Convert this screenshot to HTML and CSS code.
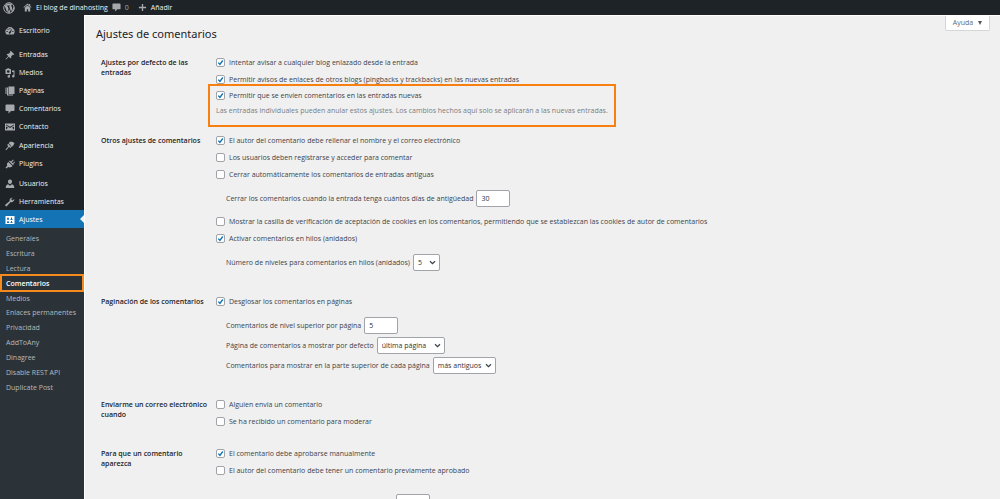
FILE: index.html
```html
<!DOCTYPE html>
<html lang="es">
<head>
<meta charset="utf-8">
<title>Ajustes de comentarios</title>
<link rel="stylesheet" href="styles.css">
</head>
<body>
<header class="bar">
  <a class="bar-logo" href="#" aria-label="WordPress"><svg viewBox="0 0 20 20"><circle cx="10" cy="10" r="8.8" fill="none" stroke="currentColor" stroke-width="1.6"/><path d="M2.9 6.8 7 17.4l2.2-6.3L7.6 6.9 6.3 6.6V6h5.4v.6l-1.4.3 3.3 9.8 1.3-4.5c.5-1.800.2-2.900-.4-3.900-1.300-2-.6-3.500.9-3.700A8 8 0 0 0 3.500 5.800z" fill="currentColor"/><path d="m10.200 11.500-2.300 6.200a8 8 0 0 0 4.500 0zM17.200 6.600c.2 1.700-.3 3-.9 4.600l-2.200 5.900a8 8 0 0 0 3.100-10.500z" fill="currentColor"/></svg></a>
  <a class="bar-item bar-site" href="#"><svg viewBox="0 0 20 20"><path d="M10 1 1 9.500l1.200 1.300L10 3.800l7.800 7L19 9.500l-3-2.900V2h-2.500v2.300zM4 10.800V19h4.500v-5h3v5H16v-8.200l-6-5.300z" fill="currentColor"/></svg>El blog de dinahosting</a>
  <a class="bar-item bar-comments" href="#"><svg viewBox="0 0 20 20"><path d="M3 1h14a2 2 0 0 1 2 2v9a2 2 0 0 1-2 2h-5l-5 5v-5H3a2 2 0 0 1-2-2V3a2 2 0 0 1 2-2z" fill="currentColor"/></svg>0</a>
  <a class="bar-item" href="#"><svg viewBox="0 0 20 20"><path d="M8.500 2h3v6.500H18v3h-6.500V18h-3v-6.500H2v-3h6.500z" fill="currentColor"/></svg>Añadir</a>
</header>
<div class="layout">
  <nav class="side" aria-label="Menú principal">
    <a class="item" href="#"><svg viewBox="0 0 20 20"><path fill-rule="evenodd" d="M3 17a9 9 0 1 1 14 0zM9 4v2.500h2V4zM4.500 6.500l1.700 1.700 1.300-1.300-1.700-1.700zM3 10v2h2.500v-2zm11.500 0v2H17v-2zM14.500 5 9 11.500a2 2 0 1 0 2.500 1.700z" fill="currentColor"/></svg>Escritorio</a>
    <a class="item gap-lg" href="#"><svg viewBox="0 0 20 20"><path d="m11.500 1.500 7 7-1.500 1.400-1.300-.4-3.200 3.200c.4 1.800 0 3.300-1.200 4.300l-3.600-3.600L2 19l-1-1 5.600-5.700L3 8.700c1-1.200 2.600-1.600 4.300-1.200l3.200-3.200-.4-1.300z" fill="currentColor"/></svg>Entradas</a>
    <a class="item" href="#"><svg viewBox="0 0 20 20"><path fill-rule="evenodd" d="M2 2h2l1-1.500h3L9 2h2a1 1 0 0 1 1 1v8a1 1 0 0 1-1 1H2a1 1 0 0 1-1-1V3a1 1 0 0 1 1-1zm4.500 2.300a2.700 2.700 0 1 0 0 5.400 2.700 2.700 0 0 0 0-5.400zM14 5h5v11.500a2.500 2.500 0 1 1-2-2.400V8h-3zM10 13.500V17a2.500 2.500 0 1 1-2-2.500v-1z" fill="currentColor"/></svg>Medios</a>
    <a class="item" href="#"><svg viewBox="0 0 20 20"><path d="M7 1h12v15H7zM4 3h2v14h10v2H4zM1 3h2v13H1z" fill="currentColor"/></svg>Páginas</a>
    <a class="item" href="#"><svg viewBox="0 0 20 20"><path d="M3 1h14a2 2 0 0 1 2 2v9a2 2 0 0 1-2 2h-5l-5 5v-5H3a2 2 0 0 1-2-2V3a2 2 0 0 1 2-2z" fill="currentColor"/></svg>Comentarios</a>
    <a class="item" href="#"><svg viewBox="0 0 20 20"><path fill-rule="evenodd" d="M0 3h20v14H0zm2 2v1.500l8 5.500 8-5.500V5l-8 4.500zm0 4v6l4-3.500zm16 0-4 2.500 4 3.500z" fill="currentColor"/></svg>Contacto</a>
    <a class="item gap-sm" href="#"><svg viewBox="0 0 20 20"><path d="M9 2c4-1 7 .5 10 2-1 3-2.500 6-6 8l-3-5-2-2zM6.500 5l6 7.500-1.500 1.500-3-2-5.500 6.500L1 17l5.500-6L4.500 8z" fill="currentColor"/></svg>Apariencia</a>
    <a class="item" href="#"><svg viewBox="0 0 20 20"><path d="m12 5 4-4 1.500 1.500-4 4 2 2L19 5l1 1.500-3.500 3.500 1 1-1.500 1.500L8 4.500 9.500 3zM7 6l8 8c-2.500 3-6 3.500-8.500 2L3 19l-2-2 3.500-3.500C3 11 4 8 7 6z" fill="currentColor"/></svg>Plugins</a>
    <a class="item gap-md" href="#"><svg viewBox="0 0 20 20"><path d="M10 1a4 4 0 0 1 4 4.500C14 8 12.500 10 10 10S6 8 6 5.500A4 4 0 0 1 10 1zM6 10.500l4 3 4-3c3 1 4.500 3 4.500 7.500h-17c0-4.500 1.500-6.500 4.500-7.500z" fill="currentColor"/></svg>Usuarios</a>
    <a class="item" href="#"><svg viewBox="0 0 20 20"><path d="M16.500 8.800a5 5 0 0 1-5.200 1.200L4 18a2 2 0 0 1-3-2.800l8.500-7A5 5 0 0 1 15 1.500l-2.700 3.200 2.500 2.500L18.500 4a5 5 0 0 1-2 4.800z" fill="currentColor"/></svg>Herramientas</a>
    <a class="item current" href="#"><svg viewBox="0 0 20 20"><path fill-rule="evenodd" d="M1 2h18v16H1zm4 3v1.500H4V9h1v1h2V9h1V6.500H7V5zm7 0v3h-1v2h4V8h-1V5zM5 12v1.500H4V16h4v-2.500H7V12zm7 0v2h-1v2h4v-2h-1v-2z" fill="currentColor"/></svg>Ajustes</a>
    <div class="sub">
      <div class="sub-list">
        <a href="#">Generales</a>
        <a href="#">Escritura</a>
        <a href="#">Lectura</a>
        <a class="active" href="#">Comentarios</a>
        <a href="#">Medios</a>
        <a href="#">Enlaces permanentes</a>
        <a href="#">Privacidad</a>
        <a href="#">AddToAny</a>
        <a href="#">Dinagree</a>
        <a href="#">Disable REST API</a>
        <a href="#">Duplicate Post</a>
      </div>
    </div>
  </nav>
  <main class="main">
    <div class="head">
      <h1>Ajustes de comentarios</h1>
      <button class="help" type="button">Ayuda <span class="caret"></span></button>
    </div>
    <form>
      <section class="group">
        <h2>Ajustes por defecto de las entradas</h2>
        <div class="fields">
          <label class="check"><input type="checkbox" checked>Intentar avisar a cualquier blog enlazado desde la entrada</label>
          <label class="check"><input type="checkbox" checked>Permitir avisos de enlaces de otros blogs (pingbacks y trackbacks) en las nuevas entradas</label>
          <div class="marked">
            <label class="check"><input type="checkbox" checked>Permitir que se envíen comentarios en las entradas nuevas</label>
            <p class="hint">Las entradas individuales pueden anular estos ajustes. Los cambios hechos aquí solo se aplicarán a las nuevas entradas.</p>
          </div>
        </div>
      </section>
      <section class="group">
        <h2>Otros ajustes de comentarios</h2>
        <div class="fields">
          <label class="check"><input type="checkbox" checked>El autor del comentario debe rellenar el nombre y el correo electrónico</label>
          <label class="check"><input type="checkbox">Los usuarios deben registrarse y acceder para comentar</label>
          <label class="check"><input type="checkbox">Cerrar automáticamente los comentarios de entradas antiguas</label>
          <div class="nested">
            <label class="line">Cerrar los comentarios cuando la entrada tenga cuántos días de antigüedad <input class="num" type="text" value="30"></label>
          </div>
          <label class="check"><input type="checkbox">Mostrar la casilla de verificación de aceptación de cookies en los comentarios, permitiendo que se establezcan las cookies de autor de comentarios</label>
          <label class="check"><input type="checkbox" checked>Activar comentarios en hilos (anidados)</label>
          <div class="nested">
            <label class="line">Número de niveles para comentarios en hilos (anidados) <select class="sel-xs"><option>5</option></select></label>
          </div>
        </div>
      </section>
      <section class="group">
        <h2>Paginación de los comentarios</h2>
        <div class="fields">
          <label class="check"><input type="checkbox" checked>Desglosar los comentarios en páginas</label>
          <div class="nested">
            <label class="line">Comentarios de nivel superior por página <input class="num" type="text" value="5"></label>
            <label class="line">Página de comentarios a mostrar por defecto <select class="sel-lg"><option>última página</option></select></label>
            <label class="line">Comentarios para mostrar en la parte superior de cada página <select class="sel-md"><option>más antiguos</option></select></label>
          </div>
        </div>
      </section>
      <section class="group">
        <h2>Enviarme un correo electrónico cuando</h2>
        <div class="fields">
          <label class="check"><input type="checkbox">Alguien envía un comentario</label>
          <label class="check"><input type="checkbox">Se ha recibido un comentario para moderar</label>
        </div>
      </section>
      <section class="group">
        <h2>Para que un comentario aparezca</h2>
        <div class="fields">
          <label class="check"><input type="checkbox" checked>El comentario debe aprobarse manualmente</label>
          <label class="check"><input type="checkbox">El autor del comentario debe tener un comentario previamente aprobado</label>
        </div>
      </section>
      <section class="group">
        <div class="fields moderation">
          <input class="num" type="text" aria-label="Enlaces">
        </div>
      </section>
    </form>
  </main>
</div>
</body>
</html>
```
FILE: styles.css
```css
* { box-sizing: border-box; }
html, body { height: 100%; }
body {
  margin: 0;
  display: flex;
  flex-direction: column;
  overflow: hidden;
  background: #f0f0f0;
  color: #3c434a;
  font: 7px/10px "Open Sans", "Noto Sans", sans-serif;
}
a { color: inherit; text-decoration: none; }
svg { display: block; flex: none; }

.bar {
  flex: none;
  display: flex;
  align-items: center;
  height: 15px;
  padding-left: 3px;
  background: #1d2327;
  color: #f0f0f1;
}
.bar svg { width: 9px; height: 9px; color: #a7aaad; }
.bar .bar-logo { margin-right: 8px; }
.bar .bar-logo svg { width: 12px; height: 12px; }
.bar-item { display: flex; align-items: center; gap: 4px; margin-right: 9px; }
.bar-site { margin-right: 4px; }
.bar-comments { color: #a7aaad; }

.layout { flex: 1; min-height: 0; display: flex; }
.side {
  flex: none;
  display: flex;
  flex-direction: column;
  width: 84px;
  padding-top: 6px;
  background: #1d2327;
  color: #f0f0f1;
}
.item {
  flex: none;
  display: flex;
  align-items: center;
  gap: 4px;
  height: 18px;
  padding: 1px 0 0 5px;
}
.item svg { width: 10px; height: 10px; color: #a7aaad; }
.gap-lg { margin-top: 6px; }
.gap-md { margin-top: 2px; }
.gap-sm { margin-top: 1px; }
.current { position: relative; background: #1373b5; color: #fff; }
.item.current svg { color: #fff; }
.current::after {
  content: "";
  position: absolute;
  right: 0;
  top: 5px;
  border: 4px solid transparent;
  border-left: 0;
  border-right-color: #f0f0f0;
}
.sub {
  flex: 1;
  padding-top: 4px;
  background: #2c3338;
  color: #b4b9be;
}
.sub-list { display: grid; grid-auto-rows: 1fr; height: 163px; }
.sub-list a { display: flex; align-items: center; padding-left: 6px; }
.sub-list .active { position: relative; color: #fff; font-weight: 600; }
.sub-list .active::after {
  content: "";
  position: absolute;
  inset: -2px 0 -1px;
  border: 2px solid #f78a1d;
}

.main {
  flex: 1;
  min-width: 0;
  padding: 0 10px 0 11px;
  border: solid #fff;
  border-width: 1px 0 0 1px;
}
.head { display: flex; justify-content: space-between; align-items: flex-start; height: 38px; }
h1 { margin: 9px 0 0; font: 400 11px/18px "Noto Sans", sans-serif; color: #1d2327; }
.help {
  display: flex;
  align-items: center;
  justify-content: center;
  gap: 5px;
  width: 45px;
  height: 15px;
  padding: 0;
  border: 1px solid #d5d6d8;
  border-top: 0;
  border-radius: 0 0 2px 2px;
  background: #fff;
  color: #646970;
  font: inherit;
}
.caret { border: 2px solid transparent; border-top: 4px solid #50575e; border-bottom: 0; }

.group {
  display: grid;
  grid-template-columns: 107px 1fr;
  gap: 8px;
  padding: 0 0 15px 5px;
}
h2 { margin: 4px 0 0; font-size: 7px; line-height: 10px; font-weight: 600; color: #1d2327; }
.fields { grid-column: 2; }
.check { display: flex; align-items: center; gap: 4px; height: 17px; }
.check input {
  appearance: none;
  flex: none;
  width: 9px;
  height: 9px;
  margin: 0;
  border: 1px solid #a0a3a8;
  border-radius: 2px;
  background: #fff;
}
.check input:checked {
  background: #fff url("data:image/svg+xml,%3Csvg xmlns='http://www.w3.org/2000/svg' viewBox='0 0 7 7'%3E%3Cpath d='M1.300 3.600 2.900 5.400 5.800 1.500' fill='none' stroke='%231373b5' stroke-width='1.400'/%3E%3C/svg%3E") center / 7px 7px no-repeat;
}
.marked { position: relative; width: fit-content; margin-top: -1px; }
.hint { margin: 2px 0 1px; color: #787c82; }
.marked::after {
  content: "";
  position: absolute;
  inset: -3px -8px -11px -8px;
  border: 2px solid #f78010;
  pointer-events: none;
}
.nested { display: grid; gap: 3px; margin: 7px 0 6px 10px; }
.nested:last-child { margin-bottom: 7px; }
.line { display: flex; align-items: center; gap: 3px; height: 17px; }
.num, select {
  height: 17px;
  margin: 0;
  padding: 0 4px;
  border: 1px solid #a0a3a8;
  border-radius: 2px;
  background: #fff;
  color: #2c3338;
  font: inherit;
}
.num { width: 34px; }
select {
  appearance: none;
  background: #fff url("data:image/svg+xml,%3Csvg xmlns='http://www.w3.org/2000/svg' viewBox='0 0 7 7'%3E%3Cpath d='M1 2.200 3.500 4.700 6 2.200' fill='none' stroke='%233c434a' stroke-width='1.300'/%3E%3C/svg%3E") right 3px center / 7px 7px no-repeat;
}
.sel-xs { width: 27px; }
.sel-md { width: 63px; }
.sel-lg { width: 68px; }
.moderation { padding-left: 180px; }
```
